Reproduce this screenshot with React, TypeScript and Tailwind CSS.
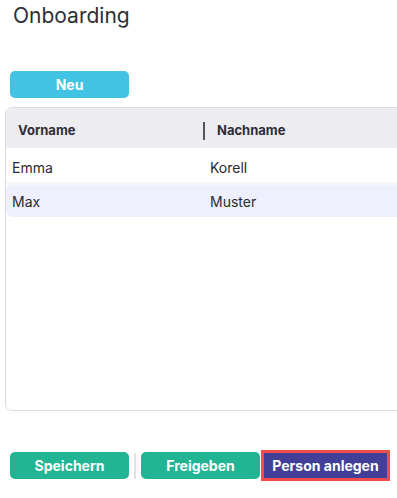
import React from "react";

export default function App() {
  const rows = [
    { v: "Emma", n: "Korell", hl: false },
    { v: "Max", n: "Muster", hl: true },
  ];
  return (
    <div
      className="w-[397px] h-[498px] overflow-hidden bg-white flex flex-col"
      style={{ fontFamily: "Inter, 'Noto Sans', sans-serif" }}
    >
      <h1 className="pt-[3px] pl-[13px] text-[21px] leading-[25px] font-normal text-[#2e2e33]">
        Onboarding
      </h1>
      <div className="mt-[43px] pl-[10px]">
        <button className="w-[119px] h-[27px] rounded-[5px] bg-[#42c3e3] text-white text-[14px] font-bold leading-none">
          Neu
        </button>
      </div>
      <div className="mt-[9px] ml-[5px] w-[420px] h-[304px] shrink-0 border border-[#dcdce2] rounded-[7px] overflow-hidden flex flex-col">
        <div className="h-[40px] pt-[5px] bg-[#ececf1] flex items-center text-[13px] font-bold text-[#2e2e38]">
          <div className="w-[197px] pl-[12px]">Vorname</div>
          <div className="w-[2px] h-[18px] bg-[#555]" />
          <div className="pl-[12px]">Nachname</div>
        </div>
        {rows.map((r, i) => (
          <React.Fragment key={r.v}>
            {i > 0 && <div className="h-[3px] bg-[#f5f6fc]" />}
            <div
              className={
                "flex items-center text-[14px] text-[#2a2a30] " +
                (r.hl ? "h-[32px] bg-[#eef0fd] rounded-l-[6px]" : "h-[34px] pt-[5px] bg-white")
              }
            >
              <div className="w-[198px] pl-[6px]">{r.v}</div>
              <div className="pl-[6px]">{r.n}</div>
            </div>
          </React.Fragment>
        ))}
      </div>
      <div className="mt-[39px] pl-[10px] flex items-center">
        <button className="w-[119px] h-[27px] rounded-[5px] bg-[#21b594] text-white text-[14px] font-bold leading-none">
          Speichern
        </button>
        <div className="w-[2px] h-[26px] bg-[#e2e2e2] ml-[5px] mr-[5px]" />
        <button className="w-[119px] h-[27px] rounded-[5px] bg-[#21b594] text-white text-[14px] font-bold leading-none">
          Freigeben
        </button>
        <div className="ml-[1px] w-[129px] h-[31px] border-[3px] border-[#f24b4b] bg-[#413f97] flex items-center justify-center">
          <span className="text-white text-[14px] font-bold leading-none">Person anlegen</span>
        </div>
      </div>
    </div>
  );
}
